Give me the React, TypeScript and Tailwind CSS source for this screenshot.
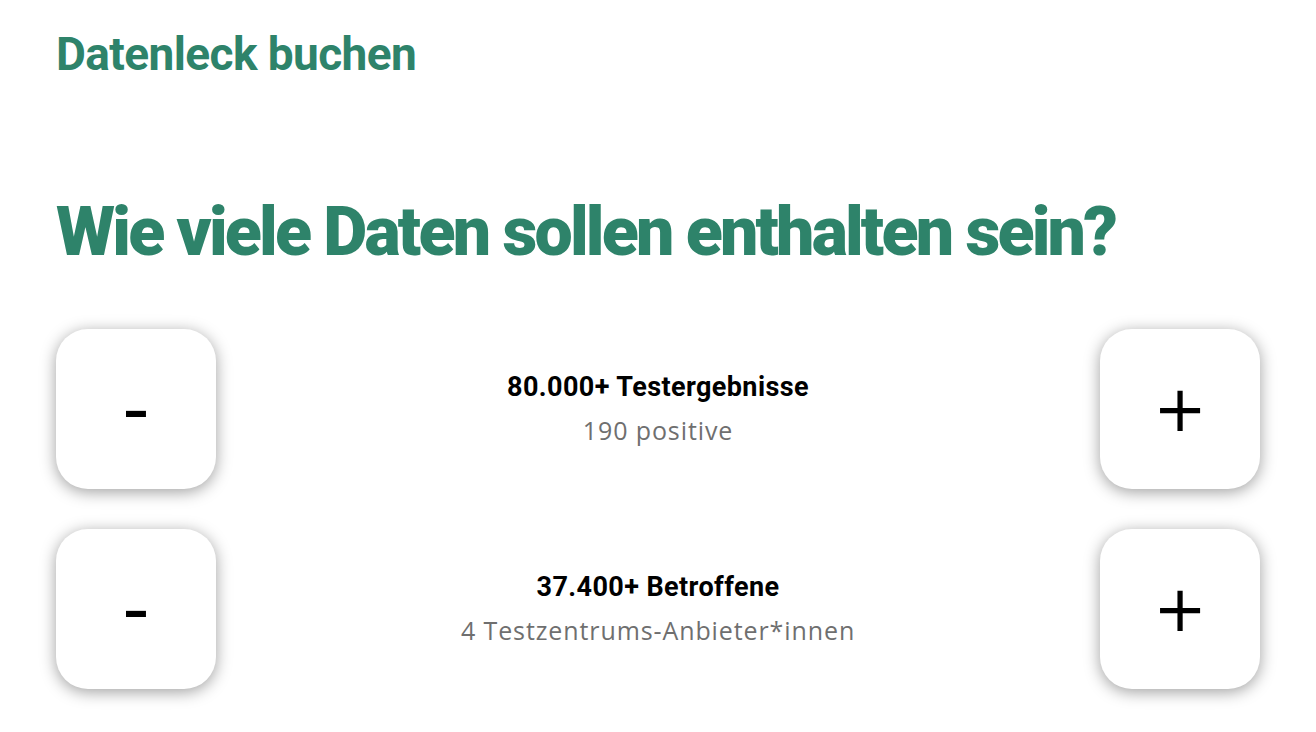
import React from "react";

const green = "text-[#2e836a]";

function StepButton({ sign }: { sign: "+" | "-" }) {
  return (
    <button className="flex h-[160px] w-[160px] shrink-0 items-center justify-center rounded-[32px] bg-white shadow-[0_3px_16px_rgba(0,0,0,0.38)]">
      <span
        className={
          sign === "+"
            ? "text-[64px] font-normal leading-none text-black"
            : "text-[76px] font-normal leading-none text-black"
        }
        style={{ fontFamily: '"DejaVu Sans", sans-serif' }}
      >
        {sign}
      </span>
    </button>
  );
}

function Row({ title, sub }: { title: string; sub: string }) {
  return (
    <div className="flex items-center justify-between">
      <StepButton sign="-" />
      <div className="flex flex-1 flex-col items-center text-center">
        <div className="text-[27px] font-bold leading-[43px] tracking-[0.4px] text-black">{title}</div>
        <div
          className="text-[25px] font-medium leading-[43px] tracking-[0.9px] text-[#6f6f6f]"
          style={{ fontFamily: '"Open Sans", sans-serif' }}
        >
          {sub}
        </div>
      </div>
      <StepButton sign="+" />
    </div>
  );
}

export default function App() {
  return (
    <div
      className="min-h-screen bg-white px-[56px] pt-[24px]"
      style={{ fontFamily: 'Roboto, "Noto Sans", sans-serif' }}
    >
      <h2 className={`text-[46px] font-bold leading-[60px] tracking-[-0.6px] ${green}`}>Datenleck buchen</h2>
      <h1 className={`mt-[108px] text-[68px] font-black leading-[80px] tracking-[-2.8px] ${green}`}>
        Wie viele Daten sollen enthalten sein?
      </h1>
      <div className="mt-[57px] flex flex-col gap-[40px]">
        <Row title="80.000+ Testergebnisse" sub="190 positive" />
        <Row title="37.400+ Betroffene" sub="4 Testzentrums-Anbieter*innen" />
      </div>
    </div>
  );
}
